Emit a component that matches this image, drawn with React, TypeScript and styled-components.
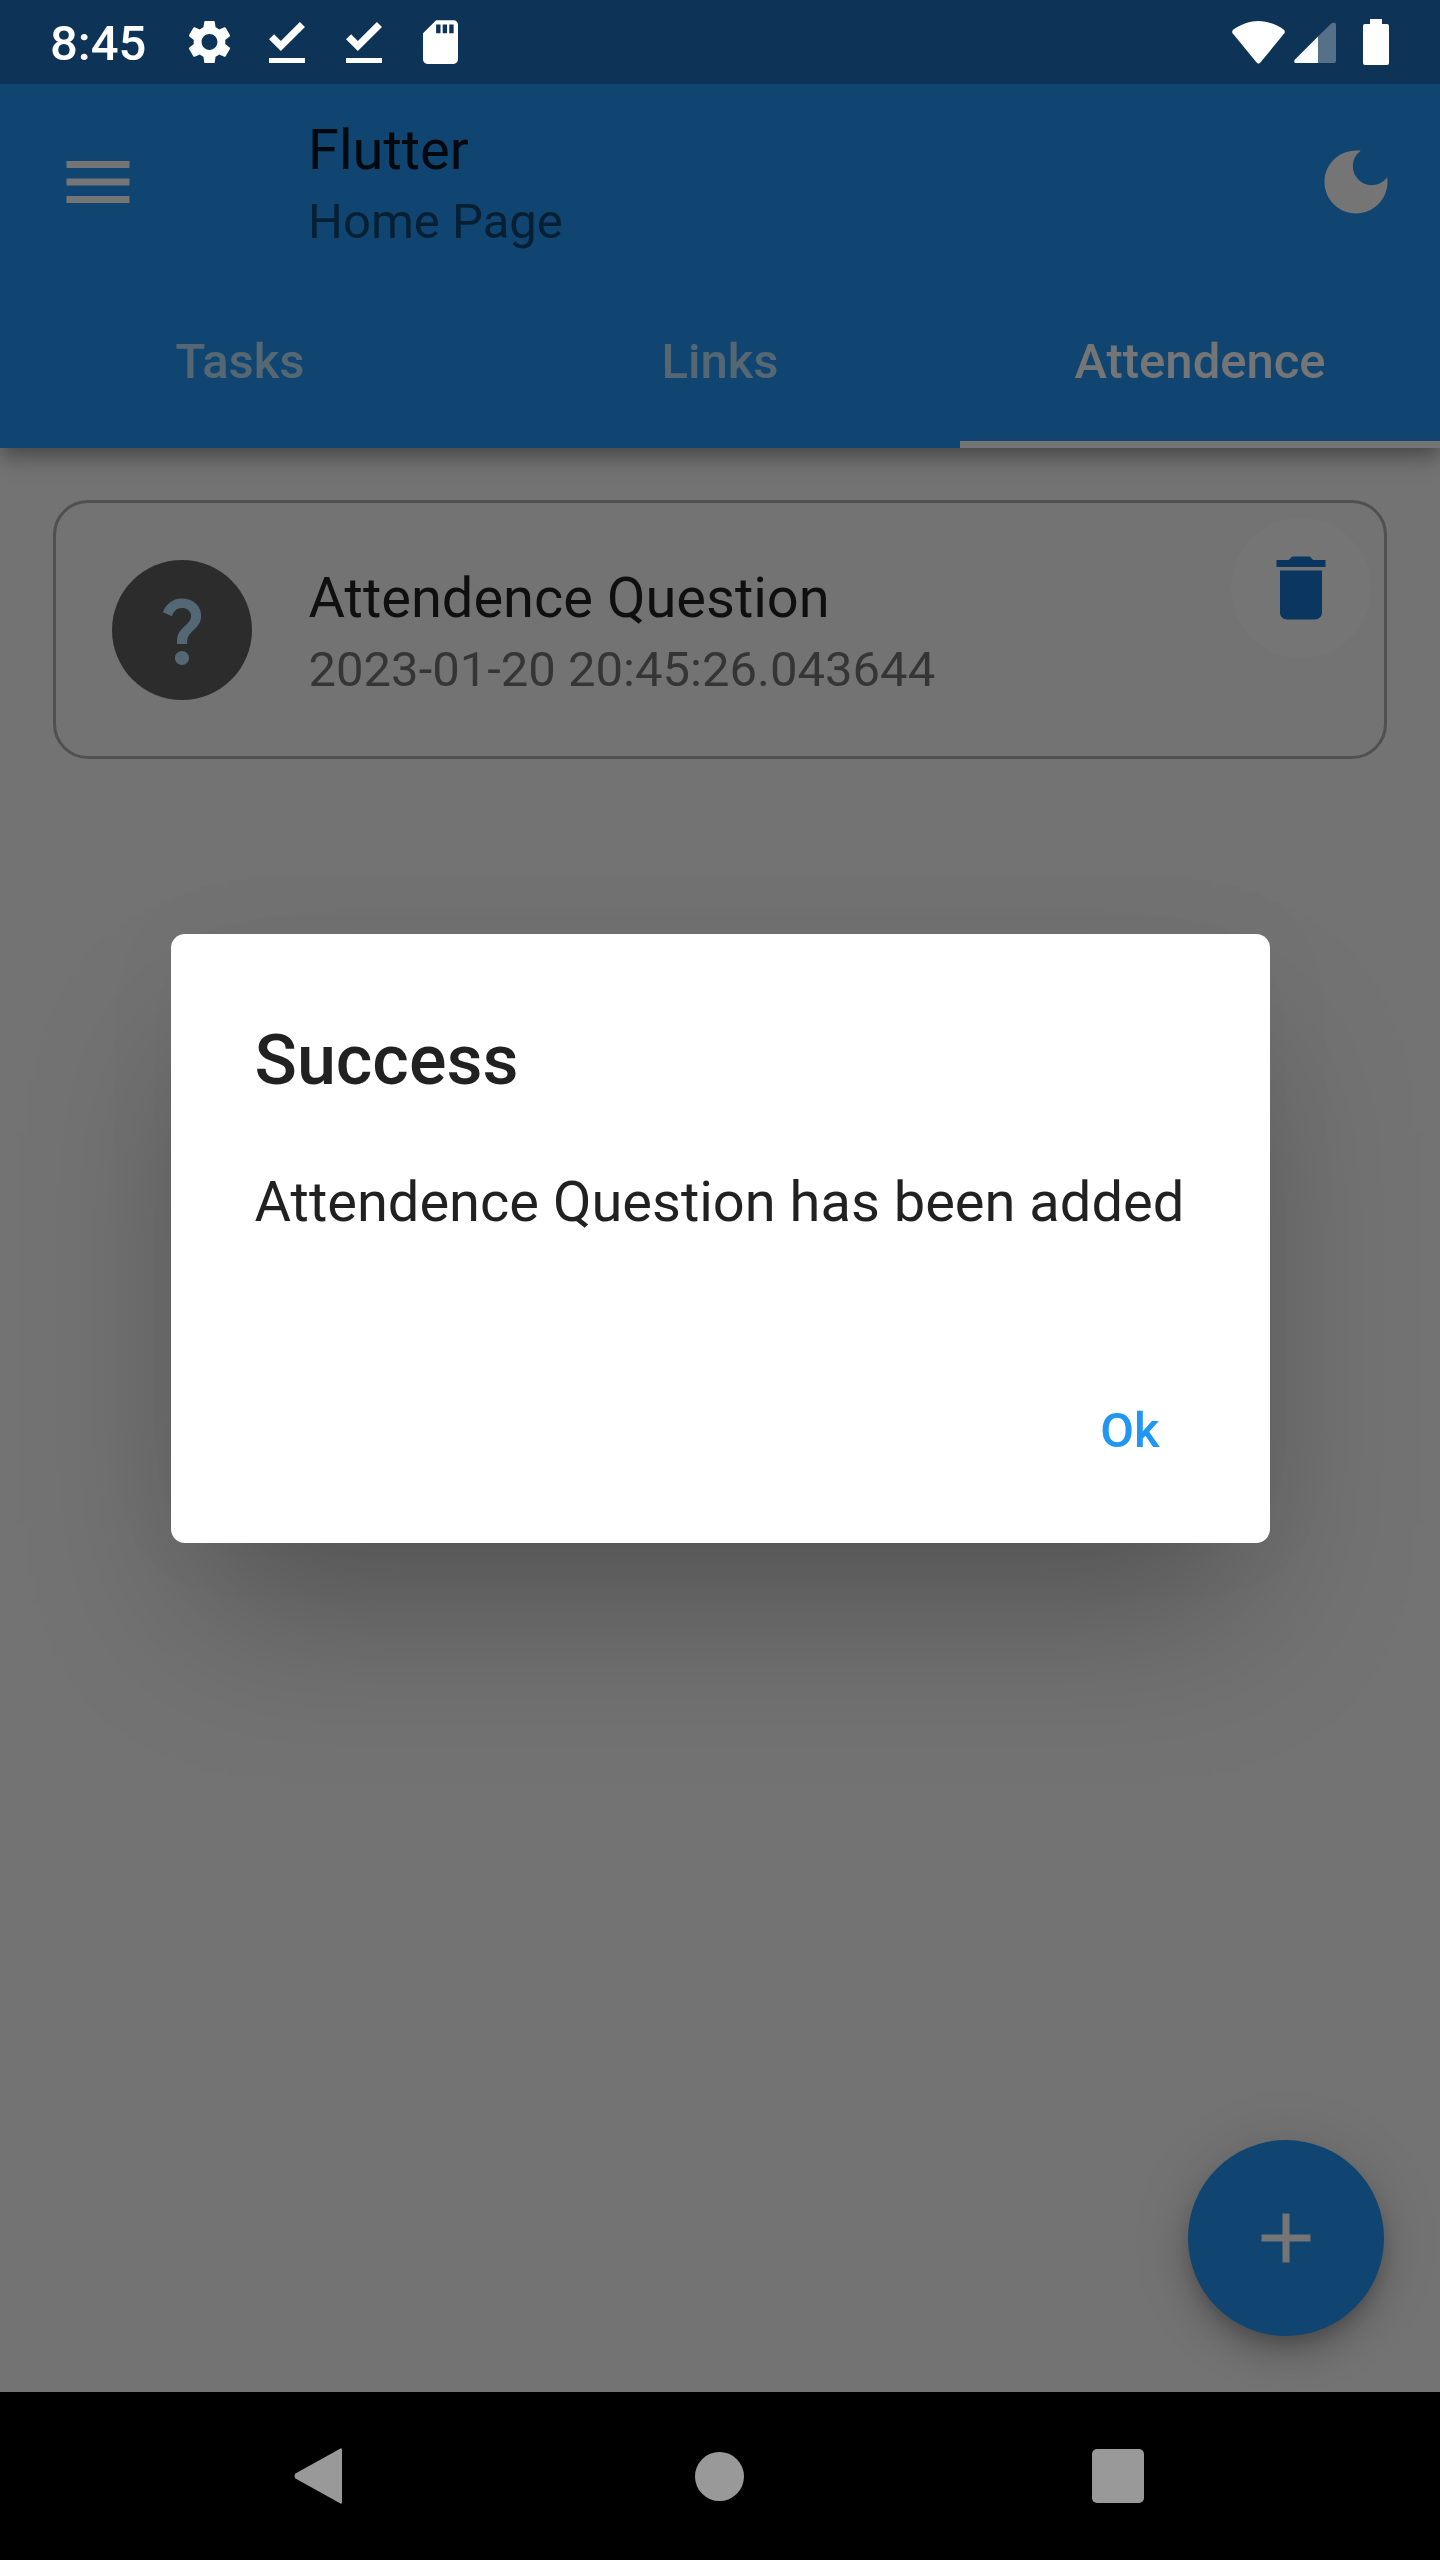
import React from 'react'
import styled, { createGlobalStyle } from 'styled-components'

const GlobalStyle = createGlobalStyle`
html, body {
    margin: 0;
    padding: 0;
    background: #000;
}
* {
    box-sizing: border-box;
}
`

const Page = styled.div`
width: 1440px;
height: 2560px;
display: flex;
flex-direction: column;
overflow: hidden;
font-family: Roboto, "Liberation Sans", sans-serif;
`

const StatusBar = styled.div`
height: 84px;
flex: none;
display: flex;
align-items: center;
justify-content: space-between;
padding: 0 51px 0 50px;
background: #0d3356;
color: #fff;
position: relative;
z-index: 2;
`

const StatusGroup = styled.div`
display: flex;
align-items: center;
`

const Clock = styled.span`
font-size: 49px;
line-height: 57px;
font-weight: 500;
width: 138px;
padding-top: 3px;
`

const StatusIcon = styled.svg<{ $w: number; $h: number; $ml?: number }>`
display: block;
width: ${(p) => p.$w}px;
height: ${(p) => p.$h}px;
margin-left: ${(p) => p.$ml ?? 0}px;
fill: #fff;
`

const Screen = styled.div`
flex: 1;
position: relative;
display: flex;
flex-direction: column;
background: #fafafa;
overflow: hidden;
`

const AppBar = styled.header`
flex: none;
background: #2196f3;
box-shadow: 0 7px 14px -3.5px rgba(0, 0, 0, 0.2), 0 14px 17.5px 0 rgba(0, 0, 0, 0.14), 0 3.5px 35px 0 rgba(0, 0, 0, 0.12);
`

const Toolbar = styled.div`
height: 196px;
display: flex;
align-items: center;
`

const Leading = styled.div`
width: 196px;
height: 196px;
flex: none;
display: flex;
align-items: center;
justify-content: center;
`

const MaterialIcon = styled.svg<{ $size?: number; $color?: string }>`
display: block;
flex: none;
width: ${(p) => p.$size ?? 84}px;
height: ${(p) => p.$size ?? 84}px;
fill: ${(p) => p.$color ?? '#fff'};
`

const Heading = styled.div`
flex: 1;
padding: 2px 0 0 112px;
display: flex;
flex-direction: column;
gap: 10px;
`

const Title = styled.div`
font-size: 56px;
line-height: 66px;
color: rgba(0, 0, 0, 0.87);
`

const Subtitle = styled.div`
font-size: 49px;
line-height: 57px;
color: rgba(0, 0, 0, 0.54);
`

const Action = styled.div`
width: 168px;
flex: none;
display: flex;
justify-content: center;
`

const Tabs = styled.div`
height: 168px;
display: grid;
grid-template-columns: repeat(3, 480px);
`

const Tab = styled.div<{ $active?: boolean }>`
display: flex;
align-items: center;
justify-content: center;
padding-top: 1px;
font-size: 49px;
line-height: 57px;
font-weight: 500;
color: ${(p) => (p.$active ? '#fff' : 'rgba(255, 255, 255, 0.7)')};
border-bottom: 7px solid ${(p) => (p.$active ? '#fff' : 'transparent')};
`

const Content = styled.main`
flex: 1;
padding: 52px 53px;
`

const Card = styled.div`
height: 259px;
display: flex;
align-items: center;
padding: 0 13.5px 0 55.5px;
border: 3.5px solid #aeaeae;
border-radius: 35px;
`

const Avatar = styled.div`
width: 140px;
height: 140px;
flex: none;
display: flex;
align-items: center;
justify-content: center;
border-radius: 50%;
background: #616161;
`

const CardText = styled.div`
flex: 1;
padding: 4px 0 0 57px;
display: flex;
flex-direction: column;
gap: 10px;
`

const CardTitle = styled.div`
font-size: 56px;
line-height: 66px;
color: rgba(0, 0, 0, 0.87);
`

const CardDate = styled.div`
font-size: 49px;
line-height: 57px;
color: rgba(0, 0, 0, 0.54);
`

const DeleteButton = styled.div`
width: 140px;
height: 140px;
flex: none;
align-self: flex-start;
margin-top: 14.5px;
display: flex;
align-items: center;
justify-content: center;
border-radius: 50%;
background: #fff;
`

const Fab = styled.div`
position: absolute;
right: 56px;
bottom: 56px;
width: 196px;
height: 196px;
display: flex;
align-items: center;
justify-content: center;
border-radius: 50%;
background: #2196f3;
box-shadow: 0 10.5px 17.5px -3.5px rgba(0, 0, 0, 0.2), 0 21px 35px 0 rgba(0, 0, 0, 0.14), 0 3.5px 63px 0 rgba(0, 0, 0, 0.12);
`

const Scrim = styled.div`
position: absolute;
inset: 0;
display: flex;
align-items: center;
justify-content: center;
background: rgba(0, 0, 0, 0.54);
`

const Dialog = styled.div`
width: 1099px;
height: 609px;
padding: 85px 110px 84px 84px;
display: flex;
flex-direction: column;
border-radius: 14px;
background: #fff;
box-shadow: 0 90px 160px -30px rgba(0, 0, 0, 0.28), 0 0 100px 0 rgba(0, 0, 0, 0.03);
`

const DialogTitle = styled.div`
font-size: 70px;
line-height: 82px;
font-weight: 500;
color: rgba(0, 0, 0, 0.87);
`

const DialogBody = styled.div`
margin-top: 68px;
font-size: 56px;
line-height: 66px;
white-space: nowrap;
color: rgba(0, 0, 0, 0.87);
`

const DialogActions = styled.div`
margin-top: auto;
display: flex;
justify-content: flex-end;
`

const OkButton = styled.div`
font-size: 49px;
line-height: 57px;
font-weight: 500;
color: #2196f3;
`

const NavBar = styled.nav`
height: 168px;
flex: none;
display: grid;
grid-template-columns: 401px 397px 52px;
align-items: center;
padding-left: 294px;
background: #000;
`

const NavBack = styled.svg`
display: block;
width: 48px;
height: 56px;
fill: #999;
`

const NavHome = styled.div`
width: 49px;
height: 49px;
border-radius: 50%;
background: #999;
`

const NavRecents = styled.div`
width: 52px;
height: 54px;
border-radius: 5px;
background: #999;
`

const App = () => {
    return (
        <Page>
            <GlobalStyle />
            <StatusBar>
                <StatusGroup>
                    <Clock>8:45</Clock>
                    <StatusIcon $w={43} $h={44} viewBox="2.6 2 18.8 20">
                        <path d="M19.14 12.94c.04-.3.06-.61.06-.94 0-.32-.02-.64-.07-.94l2.03-1.58c.18-.14.23-.41.12-.61l-1.92-3.32c-.12-.22-.37-.29-.59-.22l-2.39.96c-.5-.38-1.03-.7-1.62-.94l-.36-2.54c-.04-.24-.24-.41-.48-.41h-3.84c-.24 0-.43.17-.47.41l-.36 2.54c-.59.24-1.13.57-1.62.94l-2.39-.96c-.22-.08-.47 0-.59.22L2.74 8.87c-.12.21-.08.47.12.61l2.03 1.58c-.05.3-.09.63-.09.94s.02.64.07.94l-2.03 1.58c-.18.14-.23.41-.12.61l1.92 3.32c.12.22.37.29.59.22l2.39-.96c.5.38 1.03.7 1.62.94l.36 2.54c.05.24.24.41.48.41h3.84c.24 0 .44-.17.47-.41l.36-2.54c.59-.24 1.13-.56 1.62-.94l2.39.96c.22.08.47 0 .59-.22l1.92-3.32c.12-.22.07-.47-.12-.61l-2.01-1.58zM12 15.6c-1.98 0-3.6-1.62-3.6-3.6s1.62-3.6 3.6-3.6 3.6 1.62 3.6 3.6-1.62 3.6-3.6 3.6z" />
                    </StatusIcon>
                    <StatusIcon $w={36} $h={43} $ml={38} viewBox="5 4 14 16">
                        <path d="M5 18h14v2H5v-2zm4.6-2.7L5 10.7l2-1.9 2.6 2.6L17 4l2 2-9.4 9.3z" />
                    </StatusIcon>
                    <StatusIcon $w={36} $h={43} $ml={41} viewBox="5 4 14 16">
                        <path d="M5 18h14v2H5v-2zm4.6-2.7L5 10.7l2-1.9 2.6 2.6L17 4l2 2-9.4 9.3z" />
                    </StatusIcon>
                    <StatusIcon $w={35} $h={44} $ml={41} viewBox="4 2 16 20">
                        <path d="M18 2h-8L4.02 8 4 20c0 1.1.9 2 2 2h12c1.1 0 2-.9 2-2V4c0-1.1-.9-2-2-2zm-6 6h-2V4h2v4zm3 0h-2V4h2v4zm3 0h-2V4h2v4z" />
                    </StatusIcon>
                </StatusGroup>
                <StatusGroup>
                    <StatusIcon $w={53} $h={43} viewBox="0 0 53 43">
                        <path d="M26.5 0C35 0 44 3.2 51.5 8.5Q53.6 10 52.4 12.2L28.4 41.6Q26.5 43.8 24.6 41.6L.6 12.2Q-.6 10 1.5 8.5C9 3.2 18 0 26.5 0Z" />
                    </StatusIcon>
                    <StatusIcon $w={42} $h={41} $ml={9} viewBox="0 0 42 41">
                        <path d="M2 41Q-1 41 1 37.5L24 14.6V41Z" />
                        <path opacity="0.3" d="M24 14.6L37.5 1.2Q42-1 42 3V39Q42 41 40 41H24Z" />
                    </StatusIcon>
                    <StatusIcon $w={26} $h={46} $ml={27} viewBox="0 0 26 46">
                        <path d="M7 0h12v5h5q2 0 2 2v37q0 2-2 2H2q-2 0-2-2V7q0-2 2-2h5z" />
                    </StatusIcon>
                </StatusGroup>
            </StatusBar>
            <Screen>
                <AppBar>
                    <Toolbar>
                        <Leading>
                            <MaterialIcon viewBox="0 0 24 24">
                                <path d="M3 18h18v-2H3v2zm0-5h18v-2H3v2zm0-7v2h18V6H3z" />
                            </MaterialIcon>
                        </Leading>
                        <Heading>
                            <Title>Flutter</Title>
                            <Subtitle>Home Page</Subtitle>
                        </Heading>
                        <Action>
                            <MaterialIcon viewBox="0 0 24 24">
                                <path d="M12 3c-4.97 0-9 4.03-9 9s4.03 9 9 9 9-4.03 9-9c0-.46-.04-.92-.1-1.36-.98 1.37-2.58 2.26-4.4 2.26-2.98 0-5.4-2.42-5.4-5.4 0-1.81.89-3.42 2.26-4.4-.44-.06-.9-.1-1.36-.1z" />
                            </MaterialIcon>
                        </Action>
                    </Toolbar>
                    <Tabs>
                        <Tab>Tasks</Tab>
                        <Tab>Links</Tab>
                        <Tab $active>Attendence</Tab>
                    </Tabs>
                </AppBar>
                <Content>
                    <Card>
                        <Avatar>
                            <MaterialIcon viewBox="0 0 24 24" $color="#b8e0ff">
                                <path d="M11.07 12.85c.77-1.39 2.25-2.21 3.11-3.44.91-1.29.4-3.7-2.18-3.7-1.69 0-2.52 1.28-2.87 2.34L6.54 6.96C7.25 4.83 9.18 3 11.99 3c2.35 0 3.96 1.07 4.78 2.41.7 1.15 1.11 3.3.03 4.9-1.2 1.77-2.35 2.31-2.97 3.45-.25.46-.35.76-.35 2.24h-2.89c-.01-.78-.13-2.05.48-3.15zM14 20c0 1.1-.9 2-2 2s-2-.9-2-2 .9-2 2-2 2 .9 2 2z" />
                            </MaterialIcon>
                        </Avatar>
                        <CardText>
                            <CardTitle>Attendence Question</CardTitle>
                            <CardDate>2023-01-20 20:45:26.043644</CardDate>
                        </CardText>
                        <DeleteButton>
                            <MaterialIcon viewBox="0 0 24 24" $color="#1976d2">
                                <path d="M6 19c0 1.1.9 2 2 2h8c1.1 0 2-.9 2-2V7H6v12zM19 4h-3.5l-1-1h-5l-1 1H5v2h14V4z" />
                            </MaterialIcon>
                        </DeleteButton>
                    </Card>
                </Content>
                <Fab>
                    <MaterialIcon viewBox="0 0 24 24">
                        <path d="M19 13h-6v6h-2v-6H5v-2h6V5h2v6h6v2z" />
                    </MaterialIcon>
                </Fab>
                <Scrim>
                    <Dialog>
                        <DialogTitle>Success</DialogTitle>
                        <DialogBody>Attendence Question has been added</DialogBody>
                        <DialogActions>
                            <OkButton>Ok</OkButton>
                        </DialogActions>
                    </Dialog>
                </Scrim>
            </Screen>
            <NavBar>
                <NavBack viewBox="0 0 48 56">
                    <path d="M46 .8Q48-.6 48 2V54Q48 56.6 46 55.2L1.5 30.5Q-.5 28 1.5 25.5Z" />
                </NavBack>
                <NavHome />
                <NavRecents />
            </NavBar>
        </Page>
    )
}

export default App
